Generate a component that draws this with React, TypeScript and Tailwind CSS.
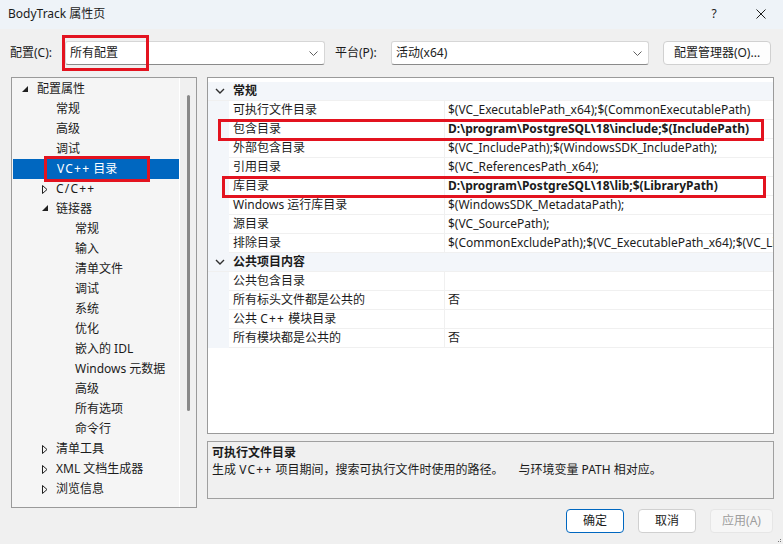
import React from 'react';

const font = "font-['Noto_Sans','Noto_Sans_CJK_SC',sans-serif]";

type TreeItem = { t: React.ReactNode; lvl: number; exp?: 'open' | 'closed'; sel?: boolean };

const plus = (s: string) => <span className="tracking-[1.2px]">{s}</span>;

const tree: TreeItem[] = [
  { t: '配置属性', lvl: 0, exp: 'open' },
  { t: '常规', lvl: 1 },
  { t: '高级', lvl: 1 },
  { t: '调试', lvl: 1 },
  { t: <>{plus('VC++')} 目录</>, lvl: 1, sel: true },
  { t: plus('C/C++'), lvl: 1, exp: 'closed' },
  { t: '链接器', lvl: 1, exp: 'open' },
  { t: '常规', lvl: 2 },
  { t: '输入', lvl: 2 },
  { t: '清单文件', lvl: 2 },
  { t: '调试', lvl: 2 },
  { t: '系统', lvl: 2 },
  { t: '优化', lvl: 2 },
  { t: '嵌入的 IDL', lvl: 2 },
  { t: 'Windows 元数据', lvl: 2 },
  { t: '高级', lvl: 2 },
  { t: '所有选项', lvl: 2 },
  { t: '命令行', lvl: 2 },
  { t: '清单工具', lvl: 1, exp: 'closed' },
  { t: 'XML 文档生成器', lvl: 1, exp: 'closed' },
  { t: '浏览信息', lvl: 1, exp: 'closed' },
];

type Row = { cat?: boolean; name: React.ReactNode; value?: string; bold?: boolean };

const rows: Row[] = [
  { cat: true, name: '常规' },
  { name: '可执行文件目录', value: '$(VC_ExecutablePath_x64);$(CommonExecutablePath)' },
  { name: '包含目录', value: 'D:\\program\\PostgreSQL\\18\\include;$(IncludePath)', bold: true },
  { name: '外部包含目录', value: '$(VC_IncludePath);$(WindowsSDK_IncludePath);' },
  { name: '引用目录', value: '$(VC_ReferencesPath_x64);' },
  { name: '库目录', value: 'D:\\program\\PostgreSQL\\18\\lib;$(LibraryPath)', bold: true },
  { name: 'Windows 运行库目录', value: '$(WindowsSDK_MetadataPath);' },
  { name: '源目录', value: '$(VC_SourcePath);' },
  { name: '排除目录', value: '$(CommonExcludePath);$(VC_ExecutablePath_x64);$(VC_LibraryPath_x64)' },
  { cat: true, name: '公共项目内容' },
  { name: '公共包含目录', value: '' },
  { name: '所有标头文件都是公共的', value: '否' },
  { name: <>公共 {plus('C++')} 模块目录</>, value: '' },
  { name: '所有模块都是公共的', value: '否' },
];

function Chevron({ color = '#606060' }: { color?: string }) {
  return (
    <svg width="9" height="5" viewBox="0 0 9 5">
      <polyline points="0.5,0.5 4.5,4.5 8.5,0.5" fill="none" stroke={color} strokeWidth="1" />
    </svg>
  );
}

function Combo({ text, width }: { text: string; width: string }) {
  return (
    <div
      className={`${width} h-[24px] flex items-center justify-between bg-white border border-[#d6d6d6] border-b-[#8a8a8a] rounded-[3px] pl-[4px] pr-[6px]`}
    >
      <span>{text}</span>
      <Chevron />
    </div>
  );
}

function Expander({ kind }: { kind: 'open' | 'closed' }) {
  if (kind === 'open') {
    return (
      <svg width="6" height="6" viewBox="0 0 6 6">
        <polygon points="6,0 6,6 0,6" fill="#1f1f1f" />
      </svg>
    );
  }
  return (
    <svg width="6" height="9" viewBox="0 0 6 9">
      <polygon points="0.5,0.5 5,4.5 0.5,8.5" fill="none" stroke="#1f1f1f" strokeWidth="1" />
    </svg>
  );
}

function TreePanel() {
  return (
    <div className="relative w-[186px] h-[431px] border border-[#9a9a9a] bg-[#f5f5f5] flex">
      <div className="w-[167px] pt-px overflow-hidden">
        {tree.map((it, i) => {
          const pad = it.lvl === 0 ? 'pl-[25px]' : it.lvl === 1 ? 'pl-[44px]' : 'pl-[63px]';
          return (
            <div
              key={i}
              className={`relative h-[20px] flex items-center ${pad} ${it.sel ? 'bg-[#0067c0] text-white ml-px' : 'text-[#1b1b1b]'}`}
            >
              {it.exp && (
                <span
                  className={`absolute flex items-center ${it.lvl === 0 ? 'left-[10px] top-[7px]' : 'left-[30px] top-[6px]'}`}
                >
                  <Expander kind={it.exp} />
                </span>
              )}
              <span className="whitespace-nowrap">{it.t}</span>
            </div>
          );
        })}
      </div>
      <div className="flex-1 bg-[#f0f0f0] border-l border-[#ffffff] flex justify-center pt-[17px]">
        <div className="w-[3px] h-[316px] bg-[#8a8a8a] rounded-full" />
      </div>
      <div className="absolute left-[32px] top-[78px] w-[106px] h-[26px] border-[3px] border-[#e3131f]" />
    </div>
  );
}

function Grid() {
  return (
    <div className="relative h-[357px] border border-[#9a9a9a] bg-white pt-[4px] overflow-hidden">
      {rows.map((r, i) =>
        r.cat ? (
          <div key={i} className="h-[19px] flex items-center bg-[#f3f6fa] border-b border-[#f0f0f0]">
            <div className="w-[21px] flex justify-center pl-[2px]">
              <svg width="10" height="6" viewBox="0 0 10 6">
                <polyline points="1,1 5,5 9,1" fill="none" stroke="#303030" strokeWidth="1.4" />
              </svg>
            </div>
            <span className="pl-[4px] font-bold text-[#1b1b1b]">{r.name}</span>
          </div>
        ) : (
          <div key={i} className="h-[19px] flex">
            <div className="w-[21px] bg-[#f3f6fa]" />
            <div className="w-[215px] pl-[4px] flex items-center border-b border-[#f0f0f0] whitespace-nowrap text-[#1b1b1b]">
              <span>{r.name}</span>
            </div>
            <div
              className={`flex-1 min-w-0 pl-[3px] flex items-center border-b border-l border-[#f0f0f0] whitespace-nowrap overflow-hidden text-[#1b1b1b] ${r.bold ? 'font-bold' : ''}`}
            >
              {r.value}
            </div>
          </div>
        )
      )}
      <div className="absolute left-[10px] top-[41px] w-[546px] h-[22px] border-[3px] border-[#e3131f]" />
      <div className="absolute left-[14px] top-[98px] w-[544px] h-[22px] border-[3px] border-[#e3131f]" />
    </div>
  );
}

export default function App() {
  return (
    <div className={`relative w-[783px] h-[544px] bg-[#f0f0f0] text-[12px] leading-none text-[#1b1b1b] ${font} overflow-hidden`}>
      <div className="h-[29px] bg-[#eef3f8] flex items-center justify-between pl-[8px] pb-px">
        <span className="text-[#1b1b1b]">BodyTrack 属性页</span>
        <div className="flex items-center">
          <span className="w-[20px] text-center mr-[32px]">?</span>
          <svg width="10" height="10" viewBox="0 0 10 10" className="mr-[17px]">
            <line x1="0.5" y1="0.5" x2="9.5" y2="9.5" stroke="#1b1b1b" strokeWidth="1" />
            <line x1="9.5" y1="0.5" x2="0.5" y2="9.5" stroke="#1b1b1b" strokeWidth="1" />
          </svg>
        </div>
      </div>

      <div className="mt-[12px] h-[24px] flex items-center pl-[10px]">
        <span className="w-[55px]">配置(C):</span>
        <div className="relative">
          <Combo text="所有配置" width="w-[260px]" />
          <div className="absolute -left-[3px] -top-[6px] w-[87px] h-[36px] border-[3px] border-[#e3131f]" />
        </div>
        <span className="w-[56px] ml-[10px]">平台(P):</span>
        <Combo text="活动(x64)" width="w-[258px]" />
        <button className="ml-[14px] w-[108px] h-[24px] bg-[#fdfdfd] border border-[#d0d0d0] rounded-[4px] text-[12px]">
          配置管理器(O)...
        </button>
      </div>

      <div className="mt-[12px] flex pl-[11px]">
        <TreePanel />
        <div className="ml-[10px] w-[567px] flex flex-col">
          <Grid />
          <div className="mt-[7px] h-[58px] border border-[#a0a0a0] bg-[#f0f0f0] px-[4px] pt-[2px]">
            <div className="font-bold h-[17px] flex items-center">可执行文件目录</div>
            <div className="h-[17px] flex items-center whitespace-nowrap">
              <span>
                生成 {plus('VC++')} 项目期间，搜索可执行文件时使用的路径。
              </span>
              <span className="ml-[15px]">与环境变量 PATH 相对应。</span>
            </div>
          </div>
        </div>
      </div>

      <div className="mt-px flex justify-end pr-[10px] gap-[14px]">
        <button className="w-[58px] h-[24px] bg-white border border-[#0067c0] rounded-[4px] text-[12px]">确定</button>
        <button className="w-[58px] h-[24px] bg-white border border-[#d0d0d0] rounded-[4px] text-[12px]">取消</button>
        <button className="w-[63px] h-[24px] bg-[#f6f6f6] border border-[#e6e6e6] rounded-[4px] text-[12px] text-[#9d9d9d]">应用(A)</button>
      </div>

      <div className="absolute right-[2px] bottom-[2px] flex flex-col items-end gap-px">
        <div className="w-px h-px bg-[#777]" />
        <div className="flex gap-px">
          <div className="w-px h-px bg-[#777]" />
          <div className="w-px h-px bg-[#777]" />
        </div>
      </div>
    </div>
  );
}
